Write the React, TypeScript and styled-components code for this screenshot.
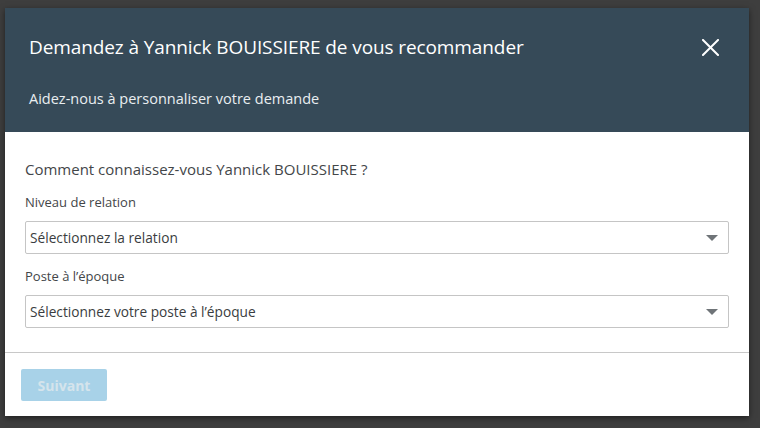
import React from "react";
import styled, { createGlobalStyle } from "styled-components";

const Global = createGlobalStyle`
  html, body { margin: 0; padding: 0; }
  body { font-family: "Open Sans", "Noto Sans", sans-serif; }
  * { box-sizing: border-box; }
`;

const Backdrop = styled.div`
  width: 760px;
  height: 428px;
  background: #3e3e3e;
  padding: 8px 11px 12px 5px;
  overflow: hidden;
`;

const Modal = styled.div`
  width: 744px;
  height: 408px;
  background: #ffffff;
  display: flex;
  flex-direction: column;
  box-shadow: 0 2px 6px rgba(0, 0, 0, 0.5);
`;

const Header = styled.header`
  flex-shrink: 0;
  background: #364a58;
  height: 124px;
  padding: 26px 24px 0 24px;
  color: #ffffff;
  display: flex;
  flex-direction: column;
`;

const TitleRow = styled.div`
  display: flex;
  align-items: center;
  justify-content: space-between;
  height: 26px;
`;

const Title = styled.h2`
  margin: 0;
  font-size: 19px;
  font-weight: 400;
  line-height: 26px;
  letter-spacing: -0.1px;
`;

const Close = styled.button`
  background: none;
  border: none;
  padding: 0;
  margin-right: 6px;
  width: 18px;
  height: 18px;
  display: flex;
  align-items: center;
  justify-content: center;
  cursor: pointer;
`;

const Subtitle = styled.p`
  margin: 28px 0 0 0;
  font-size: 14.5px;
  line-height: 22px;
  color: #e9eef1;
`;

const Body = styled.div`
  flex-shrink: 0;
  padding: 27px 20px 0 20px;
  display: flex;
  flex-direction: column;
`;

const Question = styled.div`
  font-size: 15px;
  line-height: 20px;
  color: #434649;
  margin-bottom: 14px;
`;

const Label = styled.div`
  font-size: 13px;
  line-height: 18px;
  color: #434649;
  margin-bottom: 10px;
`;

const SelectBox = styled.div`
  height: 33px;
  border: 1px solid #c5c5c5;
  border-radius: 2px;
  display: flex;
  align-items: center;
  justify-content: space-between;
  padding: 0 10px 0 4px;
  font-size: 13.7px;
  color: #3a3d40;
  margin-bottom: 13px;
`;

const Caret = styled.span`
  width: 0;
  height: 0;
  border-left: 6px solid transparent;
  border-right: 6px solid transparent;
  border-top: 6px solid #6f7478;
`;

const Footer = styled.div`
  margin-top: auto;
  border-top: 1px solid #c8c8c8;
  height: 64px;
  flex-shrink: 0;
  padding: 16px 16px 0 16px;
`;

const NextButton = styled.button`
  width: 86px;
  height: 32px;
  background: #a8d2e8;
  border: none;
  border-radius: 2px;
  color: #d5e4ec;
  font-family: "Open Sans", sans-serif;
  font-weight: 700;
  font-size: 14px;
  padding: 0;
`;

export default function App() {
  return (
    <>
      <Global />
      <Backdrop>
        <Modal>
          <Header>
            <TitleRow>
              <Title>Demandez à Yannick BOUISSIERE de vous recommander</Title>
              <Close aria-label="Fermer">
                <svg width="17" height="17" viewBox="0 0 17 17">
                  <path d="M1 1 L16 16 M16 1 L1 16" stroke="#ffffff" strokeWidth="2" strokeLinecap="square" />
                </svg>
              </Close>
            </TitleRow>
            <Subtitle>Aidez-nous à personnaliser votre demande</Subtitle>
          </Header>
          <Body>
            <Question>Comment connaissez-vous Yannick BOUISSIERE ?</Question>
            <Label>Niveau de relation</Label>
            <SelectBox>
              <span>Sélectionnez la relation</span>
              <Caret />
            </SelectBox>
            <Label>Poste à l’époque</Label>
            <SelectBox>
              <span>Sélectionnez votre poste à l’époque</span>
              <Caret />
            </SelectBox>
          </Body>
          <Footer>
            <NextButton disabled>Suivant</NextButton>
          </Footer>
        </Modal>
      </Backdrop>
    </>
  );
}
